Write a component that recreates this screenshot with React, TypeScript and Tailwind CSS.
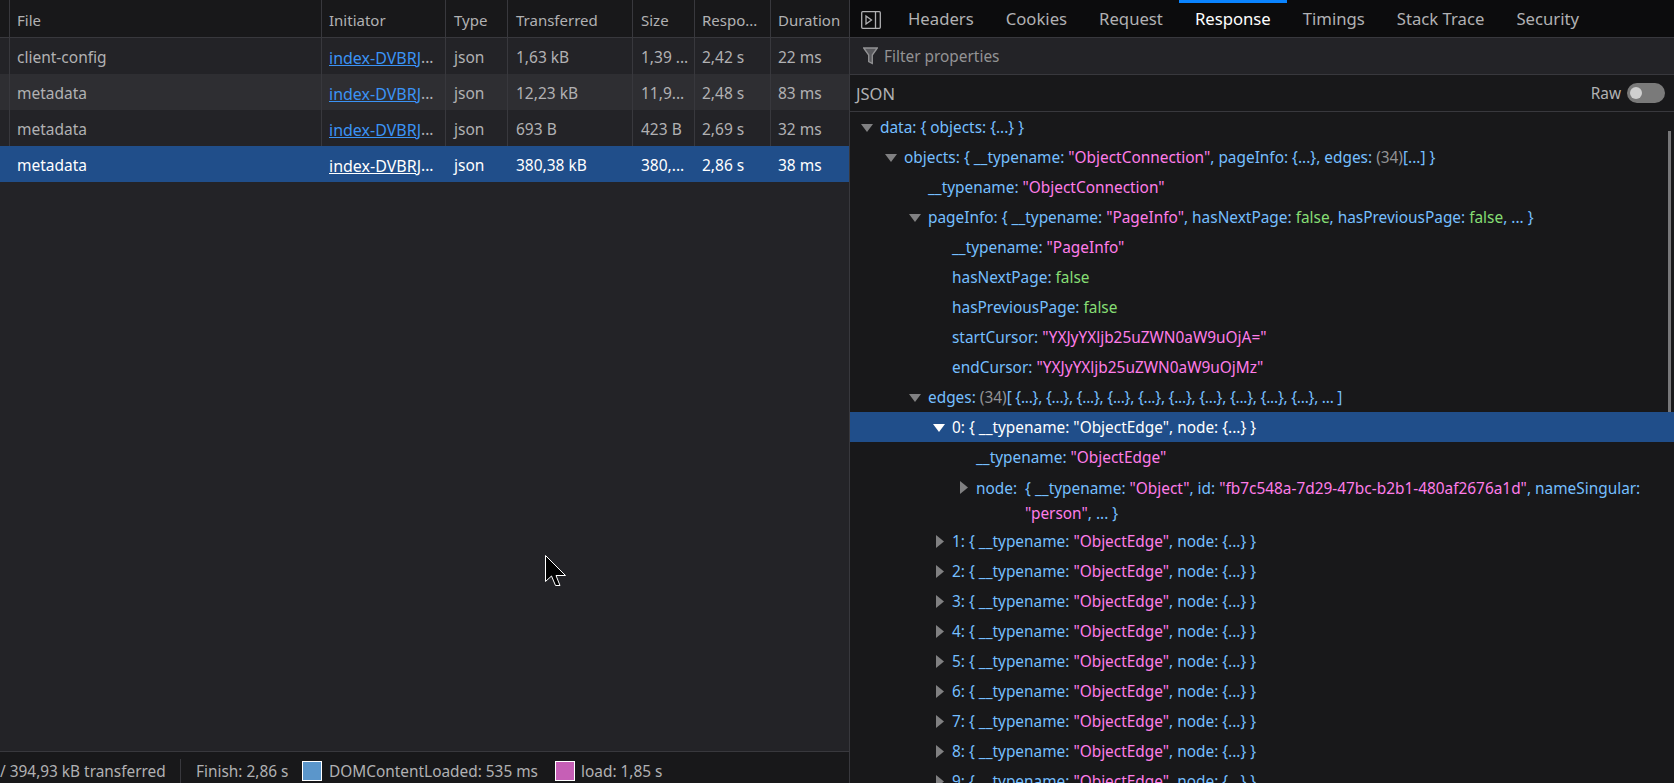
const font = '[font-family:"Noto_Sans",sans-serif]';

const columns = [
  'w-[10px]',
  'w-[312px]',
  'w-[124px]',
  'w-[62px] pl-[8px]',
  'w-[125px] pl-[8px]',
  'w-[62px] pl-[8px]',
  'w-[76px]',
  'flex-1',
];

const headers = ['', 'File', 'Initiator', 'Type', 'Transferred', 'Size', 'Respo...', 'Duration'];

const requests = [
  ['client-config', 'index-DVBRJ', 'json', '1,63 kB', '1,39 ...', '2,42 s', '22 ms'],
  ['metadata', 'index-DVBRJ', 'json', '12,23 kB', '11,9...', '2,48 s', '83 ms'],
  ['metadata', 'index-DVBRJ', 'json', '693 B', '423 B', '2,69 s', '32 ms'],
  ['metadata', 'index-DVBRJ', 'json', '380,38 kB', '380,...', '2,86 s', '38 ms'],
];

const tabs = ['Headers', 'Cookies', 'Request', 'Response', 'Timings', 'Stack Trace', 'Security'];

function Arrow({ open, white }: { open?: boolean; white?: boolean }) {
  const fill = white ? '#ffffff' : '#808082';
  return (
    <svg width="12" height="13" viewBox="0 0 12 13" className="shrink-0">
      {open ? <path d="M0 3h12L6 11z" fill={fill} /> : <path d="M4 0v13L12 6.5z" fill={fill} />}
    </svg>
  );
}

function Key({ children }: { children: React.ReactNode }) {
  return <span className="text-[#75bfff]">{children}</span>;
}

function Str({ children }: { children: React.ReactNode }) {
  return <span className="text-[#ff7de9]">{children}</span>;
}

function Bool({ children }: { children: React.ReactNode }) {
  return <span className="text-[#86de74]">{children}</span>;
}

function Row({ x, arrow, open, children }: { x: number; arrow?: boolean; open?: boolean; children: React.ReactNode }) {
  return (
    <div className="relative flex h-[30px] items-center whitespace-nowrap pt-[2px]" style={{ paddingLeft: x }}>
      {arrow && (
        <span className="absolute top-[9px]" style={{ left: open ? x - 19 : x - 20 }}>
          <Arrow open={open} />
        </span>
      )}
      {children}
    </div>
  );
}

function EdgeRow({ index }: { index: number }) {
  return (
    <Row x={102} arrow>
      <Key>
        {index}: {'{ '}__typename: <Str>"ObjectEdge"</Str>, node: {'{...} }'}
      </Key>
    </Row>
  );
}

function RequestList() {
  return (
    <div className="flex w-[850px] shrink-0 flex-col border-r border-[#38383d] bg-[#232327]">
      <div className="flex h-[38px] shrink-0 border-b border-[#38383d] bg-[#18181a] text-[#b1b1b3]">
        {headers.map((h, i) => (
          <div
            key={i}
            className={`flex items-center overflow-hidden whitespace-nowrap pt-[4px] ${i > 0 ? 'px-[7px]' : ''} ${columns[i]} ${i < 7 ? 'border-r border-[#38383d]' : ''}`}
          >
            {h}
          </div>
        ))}
      </div>
      {requests.map((r, n) => {
        const selected = n === 3;
        return (
          <div
            key={n}
            className={`flex h-9 shrink-0 text-[15.5px] ${selected ? 'bg-[#204e8a] text-white' : n === 1 ? 'bg-[#2e2e32] text-[#b1b1b3]' : 'text-[#b1b1b3]'}`}
          >
            <div className={`${columns[0]} ${selected ? '' : 'border-r border-[#38383d]'}`} />
            {r.map((cell, i) => (
              <div
                key={i}
                className={`flex items-center overflow-hidden whitespace-nowrap px-[7px] pt-[3px] ${columns[i + 1]} ${i < 6 && !selected ? 'border-r border-[#38383d]' : ''}`}
              >
                {i === 1 ? (
                  <>
                    <span className={`text-[16px] underline ${selected ? 'text-white' : 'text-[#3b93f5]'}`}>{cell}</span>
                    ...
                  </>
                ) : (
                  cell
                )}
              </div>
            ))}
          </div>
        );
      })}
      <div className="flex-1" />
      <div className="flex h-[32px] shrink-0 items-center overflow-hidden whitespace-nowrap border-t border-[#38383d] bg-[#18181a] pt-[7px] text-[15.4px] text-[#b1b1b3]">
        <span className="w-[180px] pt-[2px]">/ 394,93 kB transferred</span>
        <span className="h-6 w-px bg-[#38383d]" />
        <span className="ml-[15px] w-[106px] pt-[2px]">Finish: 2,86 s</span>
        <span className="h-5 w-5 border border-white bg-[#5b96cb]" />
        <span className="ml-[7px] w-[226px] pt-[2px]">DOMContentLoaded: 535 ms</span>
        <span className="h-5 w-5 border border-white bg-[#c65fb6]" />
        <span className="ml-[6px] pt-[2px]">load: 1,85 s</span>
      </div>
    </div>
  );
}

function ResponsePanel() {
  return (
    <div className="flex min-w-0 flex-1 flex-col bg-[#18181a] text-[15.4px]">
      <div className="flex h-[38px] shrink-0 border-b border-[#38383d] bg-[#0c0c0d] text-[16.7px] text-[#b1b1b3]">
        <div className="flex w-[42px] items-start pl-[11px] pt-[11px]">
          <svg width="20" height="18" viewBox="0 0 20 18" fill="none" stroke="#b1b1b3" strokeWidth="1.3">
            <rect x="0.7" y="0.7" width="18.6" height="16.6" rx="1" />
            <path d="M14.5 0.7v16.6" />
            <path d="M5 5l5.5 4L5 13z" />
          </svg>
        </div>
        <div className="flex">
          {tabs.map(t => (
            <div
              key={t}
              className={`relative flex items-center px-4 ${t === 'Response' ? 'text-white' : ''}`}
            >
              {t === 'Response' && <span className="absolute inset-x-0 top-0 h-[3px] bg-[#0a84ff]" />}
              {t}
            </div>
          ))}
        </div>
      </div>
      <div className="flex h-[37px] shrink-0 items-center gap-[6px] border-b border-[#38383d] bg-[#232327] pl-[13px] text-[#939395]">
        <svg width="15" height="18" viewBox="0 0 15 18" fill="none" stroke="#939395" strokeWidth="1.3">
          <path d="M0.7 1h13.6L9.3 8v8.5L5.7 14.5V8z" fill="#5a5a5e" />
        </svg>
        <span className="pt-[2px]">Filter properties</span>
      </div>
      <div className="flex h-[37px] shrink-0 items-center justify-between border-b border-[#38383d] bg-[#18181a] pl-[6px] pr-[9px] text-[#b1b1b3]">
        <span className="pt-[2px] text-[16.5px]">JSON</span>
        <div className="flex items-center gap-[6px]">
          <span className="pt-[2px]">Raw</span>
          <span className="flex h-5 w-[38px] items-center rounded-full bg-[#7a7a7a] pl-[3px]">
            <span className="h-3 w-3 rounded-full bg-[#cfcfcf]" />
          </span>
        </div>
      </div>
      <div className="relative min-h-0 flex-1 overflow-hidden">
        <span className="absolute right-[3px] top-[19px] h-[291px] w-[3px] bg-[#777779]" />
        <Row x={30} arrow open>
          <Key>data: {'{ objects: {...} }'}</Key>
        </Row>
        <Row x={54} arrow open>
          <Key>
            objects: {'{ '}__typename: <Str>"ObjectConnection"</Str>, pageInfo: {'{...}'}, edges:{' '}
            <span className="text-[#939395]">(34)</span>[...] {'}'}
          </Key>
        </Row>
        <Row x={78}>
          <Key>
            __typename: <Str>"ObjectConnection"</Str>
          </Key>
        </Row>
        <Row x={78} arrow open>
          <Key>
            pageInfo: {'{ '}__typename: <Str>"PageInfo"</Str>, hasNextPage: <Bool>false</Bool>, hasPreviousPage:{' '}
            <Bool>false</Bool>, ... {'}'}
          </Key>
        </Row>
        <Row x={102}>
          <Key>
            __typename: <Str>"PageInfo"</Str>
          </Key>
        </Row>
        <Row x={102}>
          <Key>
            hasNextPage: <Bool>false</Bool>
          </Key>
        </Row>
        <Row x={102}>
          <Key>
            hasPreviousPage: <Bool>false</Bool>
          </Key>
        </Row>
        <Row x={102}>
          <Key>
            startCursor: <Str>"YXJyYXljb25uZWN0aW9uOjA="</Str>
          </Key>
        </Row>
        <Row x={102}>
          <Key>
            endCursor: <Str>"YXJyYXljb25uZWN0aW9uOjMz"</Str>
          </Key>
        </Row>
        <Row x={78} arrow open>
          <Key>
            edges: <span className="text-[#939395]">(34)</span>
            <span className="tracking-[-0.22px]">[ {'{...}, {...}, {...}, {...}, {...}, {...}, {...}, {...}, {...}, {...}'}, ... ]</span>
          </Key>
        </Row>
        <div className="relative flex h-[30px] items-center whitespace-nowrap bg-[#204e8a] pl-[102px] pt-[2px] text-white">
          <span className="absolute left-[83px] top-[9px]">
            <Arrow open white />
          </span>
          0: {'{ '}__typename: "ObjectEdge", node: {'{...} }'}
        </div>
        <Row x={126}>
          <Key>
            __typename: <Str>"ObjectEdge"</Str>
          </Key>
        </Row>
        <div className="relative flex pl-[126px] pt-[4px] leading-[25px]">
          <span className="absolute left-[106px] top-[9px]">
            <Arrow />
          </span>
          <Key>node:&nbsp;&nbsp;</Key>
          <span className="whitespace-nowrap">
            <Key>
              {'{ '}__typename: <Str>"Object"</Str>, id: <Str>"fb7c548a-7d29-47bc-b2b1-480af2676a1d"</Str>, nameSingular:
              <br />
              <Str>"person"</Str>, ... {'}'}
            </Key>
          </span>
        </div>
        {[1, 2, 3, 4, 5, 6, 7, 8, 9].map(i => (
          <EdgeRow key={i} index={i} />
        ))}
      </div>
    </div>
  );
}

export default function App() {
  return (
    <div className={`relative flex h-[783px] w-full overflow-hidden bg-[#18181a] text-[15px] ${font}`}>
      <RequestList />
      <ResponsePanel />
      {/* mouse pointer */}
      <svg width="22" height="32" viewBox="0 0 22 32" className="absolute left-[545px] top-[555px]">
        <path d="M0.5 0.5V26.5L6.5 21L10.5 30.5H15L11 20.5H20.5z" fill="#000" stroke="#fff" strokeWidth="1" />
      </svg>
    </div>
  );
}
